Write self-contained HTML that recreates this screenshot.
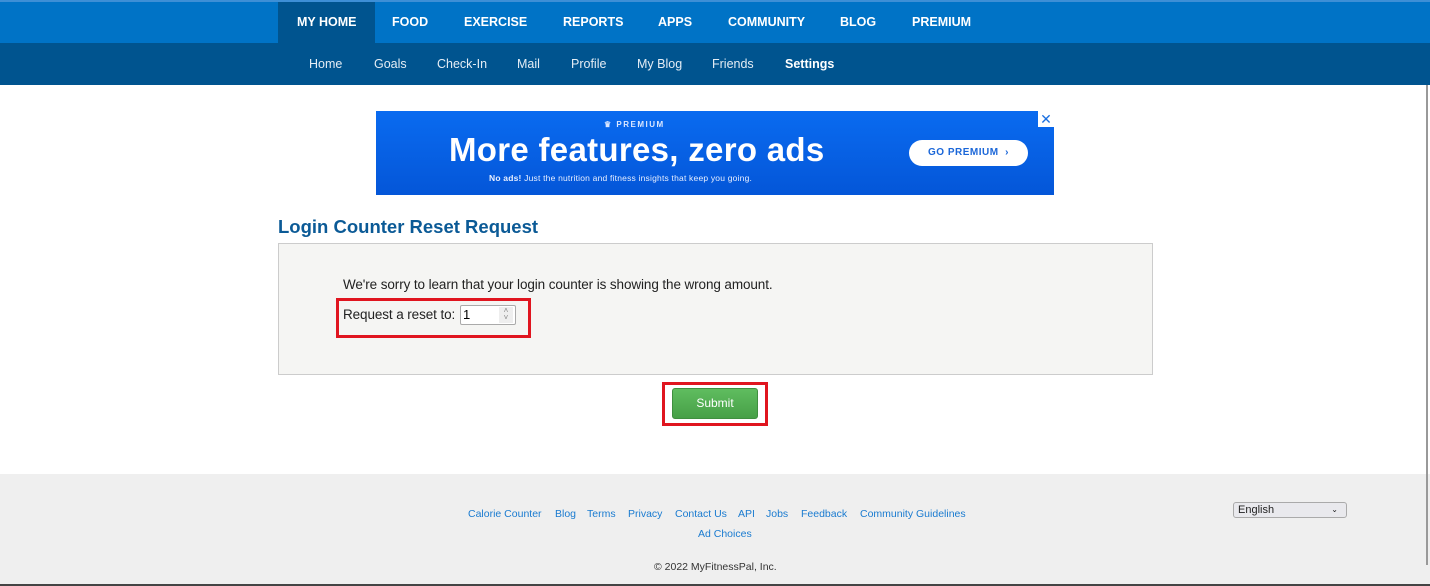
<!DOCTYPE html>
<html><head><style>
*{margin:0;padding:0;box-sizing:border-box}
body{width:1430px;height:586px;position:relative;background:#fff;font-family:"Liberation Sans",Arial,sans-serif;overflow:hidden}
.a{position:absolute}
.top{left:0;top:0;width:1430px;height:43px;background:#0073c6;border-top:2px solid #3d8fd6}
.sub{left:0;top:43px;width:1430px;height:42px;background:#00548f}
.tn{top:0;height:43px;line-height:44px;color:#fff;font-weight:bold;font-size:12.5px}
.sn{top:43px;height:42px;line-height:42px;color:#e4edf5;font-size:12.5px}
.f{color:#1a7bd0;font-size:10.5px;top:508px}
</style></head><body>
<div class="a top"></div>
<div class="a" style="left:278px;top:2px;width:97px;height:41px;background:#00548f"></div>
<div class="a sub"></div>
<span class="a tn" style="left:297px">MY HOME</span>
<span class="a tn" style="left:392px">FOOD</span>
<span class="a tn" style="left:464px">EXERCISE</span>
<span class="a tn" style="left:563px">REPORTS</span>
<span class="a tn" style="left:658px">APPS</span>
<span class="a tn" style="left:728px">COMMUNITY</span>
<span class="a tn" style="left:840px">BLOG</span>
<span class="a tn" style="left:912px">PREMIUM</span>
<span class="a sn" style="left:309px">Home</span>
<span class="a sn" style="left:374px">Goals</span>
<span class="a sn" style="left:437px">Check-In</span>
<span class="a sn" style="left:517px">Mail</span>
<span class="a sn" style="left:571px">Profile</span>
<span class="a sn" style="left:637px">My Blog</span>
<span class="a sn" style="left:712px">Friends</span>
<span class="a sn" style="left:785px;color:#fff;font-weight:bold">Settings</span>

<div class="a" style="left:376px;top:111px;width:678px;height:84px;background:linear-gradient(#0a6bf0,#0456d8)"></div>
<div class="a" style="left:1038px;top:111px;width:16px;height:16px;background:#fff;color:#1a6fe0;font-size:14px;line-height:16px;text-align:center">✕</div>
<div class="a" style="left:604px;top:120px;color:#dbe7ff;font-size:8px;font-weight:bold;letter-spacing:1.5px">♛ PREMIUM</div>
<div class="a" style="left:449px;top:131px;color:#fff;font-size:33px;font-weight:bold;letter-spacing:0.3px">More features, zero ads</div>
<div class="a" style="left:489px;top:173px;color:#e8efff;font-size:8.5px;letter-spacing:0.2px"><b>No ads!</b> Just the nutrition and fitness insights that keep you going.</div>
<div class="a" style="left:909px;top:140px;width:119px;height:26px;border-radius:13px;background:#fff;color:#1a66d8;font-size:10px;font-weight:bold;line-height:26px;text-align:center;letter-spacing:.5px">GO PREMIUM &nbsp;›</div>

<div class="a" style="left:278px;top:216px;color:#0b5a96;font-size:18.5px;font-weight:bold">Login Counter Reset Request</div>
<div class="a" style="left:278px;top:243px;width:875px;height:132px;background:#f5f5f3;border:1px solid #ccc"></div>
<div class="a" style="left:343px;top:277px;font-size:13.5px;color:#222;letter-spacing:-0.1px">We're sorry to learn that your login counter is showing the wrong amount.</div>
<div class="a" style="left:343px;top:307px;font-size:13.5px;color:#222;letter-spacing:-0.1px">Request a reset to:</div>
<div class="a" style="left:460px;top:305px;width:56px;height:20px;background:#fff;border:1px solid #aaa;border-radius:2px;font-size:13px;padding-left:2px;line-height:18px">1<span style="position:absolute;right:2px;top:1px;width:14px;height:16px;background:#eee;color:#888;font-size:8px;line-height:7px;text-align:center">˄<br>˅</span></div>
<div class="a" style="left:336px;top:298px;width:195px;height:40px;border:3px solid #e0151f"></div>
<div class="a" style="left:672px;top:388px;width:86px;height:31px;border-radius:3px;background:linear-gradient(#5fbd5f,#47a047);border:1px solid #3f8f3f;color:#fff;font-size:12px;line-height:29px;text-align:center">Submit</div>
<div class="a" style="left:662px;top:382px;width:106px;height:44px;border:3px solid #e0151f"></div>

<div class="a" style="left:0;top:474px;width:1430px;height:110px;background:#efefef"></div>
<div class="a" style="left:1426px;top:85px;width:2px;height:480px;background:#999"></div>
<div class="a" style="left:0;top:584px;width:1430px;height:2px;background:#444"></div>
<span class="a f" style="left:468px">Calorie Counter</span>
<span class="a f" style="left:555px">Blog</span>
<span class="a f" style="left:587px">Terms</span>
<span class="a f" style="left:628px">Privacy</span>
<span class="a f" style="left:675px">Contact Us</span>
<span class="a f" style="left:738px">API</span>
<span class="a f" style="left:766px">Jobs</span>
<span class="a f" style="left:801px">Feedback</span>
<span class="a f" style="left:860px">Community Guidelines</span>
<span class="a f" style="left:698px;top:528px">Ad Choices</span>
<span class="a" style="left:654px;top:561px;font-size:10.5px;color:#333">© 2022 MyFitnessPal, Inc.</span>
<div class="a" style="left:1233px;top:502px;width:114px;height:16px;border:1px solid #aaa;border-radius:3px;background:#e9e9ed;font-size:11px;line-height:14px;padding-left:4px;color:#222">English<span style="position:absolute;right:8px;top:0;font-size:8px">⌄</span></div>
</body></html>
